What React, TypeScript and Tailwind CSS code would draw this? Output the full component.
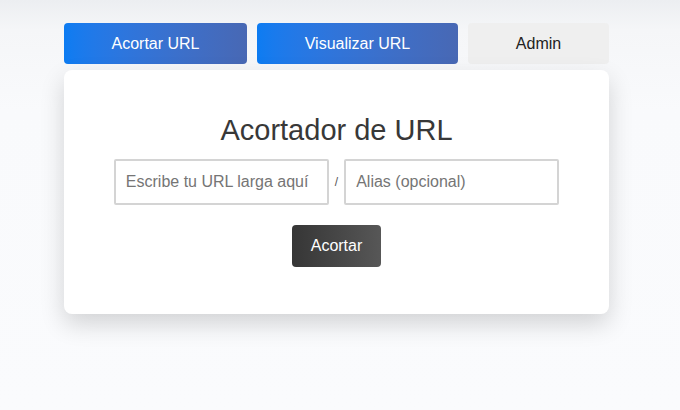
export default function App() {
  return (
    <div className="min-h-[410px] w-full bg-[linear-gradient(to_bottom,#eceef1_0px,#f5f6f8_30px,#f9fafc_110px,#fafbfd_410px)] pt-[23px] font-['Liberation_Sans',Arial,sans-serif]">
      <div className="ml-[64px] flex w-[545px] flex-col gap-[6px]">
        {/* Top navigation */}
        <nav className="flex gap-[10px]">
          <button className="h-[41px] w-[183px] rounded-[4px] bg-gradient-to-r from-[#0c7cf2] to-[#4868b4] text-[16px] text-white">
            Acortar URL
          </button>
          <button className="h-[41px] w-[201px] rounded-[4px] bg-gradient-to-r from-[#0c7cf2] to-[#4868b4] text-[16px] text-white">
            Visualizar URL
          </button>
          <button className="h-[41px] w-[141px] rounded-[4px] bg-[#efefef] text-[16px] text-[#222]">
            Admin
          </button>
        </nav>

        {/* Shortener card */}
        <div className="flex flex-col items-center rounded-[8px] bg-white pt-[42px] pb-[47px] shadow-[0_10px_24px_rgba(0,0,0,0.16)]">
          <h2 className="text-[29px] leading-[36px] text-[#383838]">Acortador de URL</h2>
          <div className="mt-[11px] flex items-center gap-[6px]">
            <input
              placeholder="Escribe tu URL larga aquí"
              className="h-[46px] w-[215px] rounded-[2px] border-2 border-[#d4d4d4] px-[10px] text-[16px] text-[#333] outline-none placeholder:text-[#757575]"
            />
            <span className="text-[12px] text-[#555]">/</span>
            <input
              placeholder="Alias (opcional)"
              className="h-[46px] w-[215px] rounded-[2px] border-2 border-[#d4d4d4] px-[10px] text-[16px] text-[#333] outline-none placeholder:text-[#757575]"
            />
          </div>
          <button className="mt-[20px] h-[42px] w-[89px] rounded-[4px] bg-gradient-to-r from-[#363636] to-[#575757] text-[16px] text-white">
            Acortar
          </button>
        </div>
      </div>
    </div>
  );
}
